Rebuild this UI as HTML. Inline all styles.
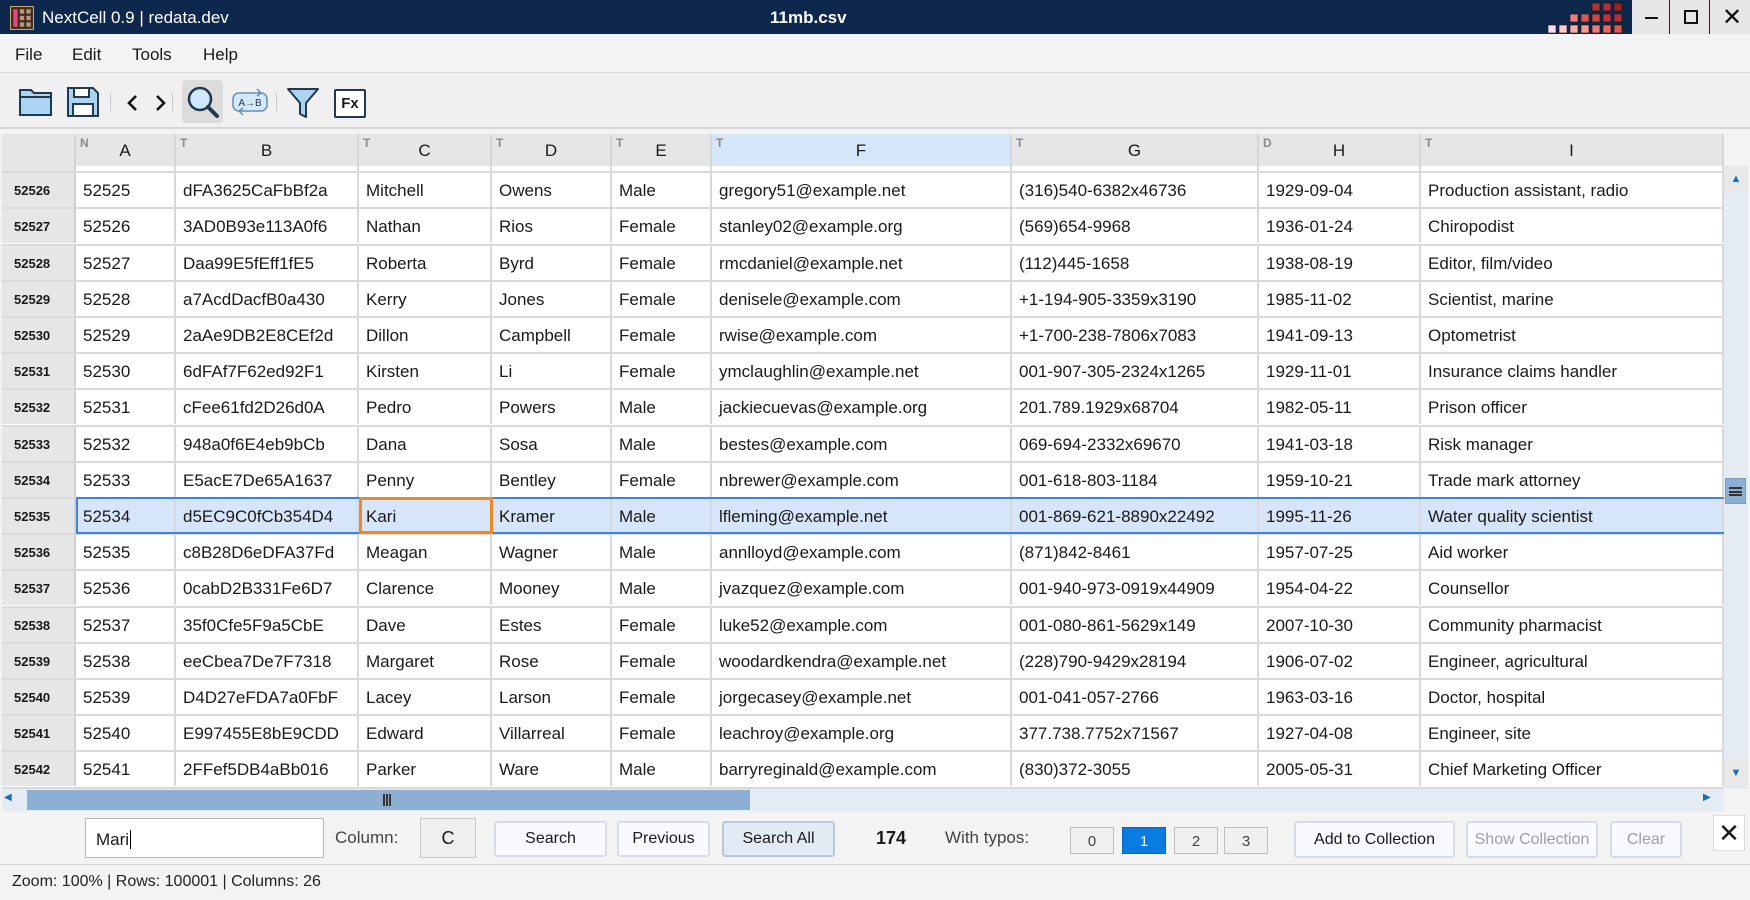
<!DOCTYPE html>
<html><head><meta charset="utf-8"><style>
*{box-sizing:border-box;margin:0;padding:0}
body{width:1750px;height:900px;overflow:hidden;background:#f3f3f3;font-family:"Liberation Sans",sans-serif;position:relative;color:#1a1a1a}
.abs{position:absolute}
#title{left:0;top:0;width:1750px;height:34px;background:#0d284c;color:#fff;font-size:17px}
#menu{left:0;top:34px;width:1750px;height:39px;background:#f3f3f3;border-bottom:1px solid #dcdcdc;font-size:17px}
#menu span{position:absolute;top:11px}
#tb{left:0;top:73px;width:1750px;height:56px;background:#f0f0f0;border-bottom:2px solid #d6d6d6}
.sep{position:absolute;top:20px;width:1px;height:18px;background:#c8c8c8}
#grid{left:2px;top:134px;width:1722px;height:655px;background:#fff;overflow:hidden}
.hdr{position:absolute;top:0;height:32px;background:#e6e6e6;border-right:2px solid #d6d6d6;font-size:17px;text-align:center;line-height:34px}
.hdr i{position:absolute;left:4px;top:-8px;font-style:normal;font-size:12px;color:#8a8a8a;font-weight:bold}
#rows{position:absolute;left:0;top:32px;width:1722px;height:623px;overflow:hidden}
.r{position:absolute;left:0;height:36.2px;width:1722px;border-bottom:2px solid #dadada;font-size:17px}
.r div{position:absolute;top:0;height:34px;line-height:35px;padding-left:7px;border-right:2px solid #dadada;white-space:nowrap;overflow:hidden}
.r div.rh{background:#e6e6e6;font-weight:bold;font-size:13px;padding-left:12px;border-right:2px solid #d0d0d0}
.sel{background:#d6e5f9}
.btn{position:absolute;border:2px solid #d8dde3;background:#f7f9fc;border-radius:3px;text-align:center;font-size:16px}
</style></head><body>
<div id="title" class="abs">
 <svg class="abs" style="left:10px;top:6px" width="24" height="24" viewBox="0 0 22 22"><rect x="0.5" y="0.5" width="21" height="21" fill="#3a2a20" stroke="#c9a070"/><rect x="3" y="3" width="4" height="16" fill="#e8457a"/><g fill="#b89a78"><rect x="9" y="3" width="4" height="4"/><rect x="15" y="3" width="4" height="4"/><rect x="9" y="9" width="4" height="4"/><rect x="15" y="9" width="4" height="4"/><rect x="9" y="15" width="4" height="4"/><rect x="15" y="15" width="4" height="4"/></g></svg>
 <span class="abs" style="left:42px;top:8px">NextCell 0.9 | redata.dev</span>
 <span class="abs" style="left:770px;top:8px;font-weight:bold">11mb.csv</span>
 <svg class="abs" style="left:1545px;top:2px" width="86" height="32"><g stroke="#111" stroke-width="0.6">
 <rect x="47" y="1" width="8" height="8" fill="#a33"/><rect x="58" y="1" width="8" height="8" fill="#a33"/><rect x="69" y="1" width="8" height="8" fill="#922"/>
 <rect x="25" y="12" width="8" height="8" fill="#e77"/><rect x="36" y="12" width="8" height="8" fill="#d55"/><rect x="47" y="12" width="8" height="8" fill="#c44"/><rect x="58" y="12" width="8" height="8" fill="#b33"/><rect x="69" y="12" width="8" height="8" fill="#a33"/>
 <rect x="3" y="23" width="8" height="8" fill="#fde"/><rect x="14" y="23" width="8" height="8" fill="#fcc"/><rect x="25" y="23" width="8" height="8" fill="#faa"/><rect x="36" y="23" width="8" height="8" fill="#f99"/><rect x="47" y="23" width="8" height="8" fill="#e77"/><rect x="58" y="23" width="8" height="8" fill="#e66"/><rect x="69" y="23" width="8" height="8" fill="#d55"/></g></svg>
 <div class="abs" style="left:1632px;top:0;width:118px;height:34px;background:#e6e6e6;color:#111">
  <div class="abs" style="left:0;top:0;width:38px;height:34px;border-right:1px solid #0d284c"></div>
  <div class="abs" style="left:13px;top:17px;width:13px;height:2px;background:#111"></div>
  <div class="abs" style="left:38px;top:0;width:40px;height:34px;border-right:1px solid #0d284c"></div>
  <div class="abs" style="left:52px;top:10px;width:14px;height:14px;border:2px solid #111"></div>
  <span class="abs" style="left:90px;top:3px;font-size:24px">✕</span>
 </div>
</div>
<div id="menu" class="abs"><span style="left:15px">File</span><span style="left:72px">Edit</span><span style="left:132px">Tools</span><span style="left:203px">Help</span></div>
<div id="tb" class="abs">
 <svg class="abs" style="left:18px;top:13px" width="36" height="32" viewBox="0 0 36 32"><path d="M2 4h11l3 3h17v22H2z" fill="#a9d4f2" stroke="#23384e" stroke-width="2"/><path d="M2 11h31" stroke="#23384e" stroke-width="2"/></svg>
 <svg class="abs" style="left:66px;top:13px" width="34" height="32" viewBox="0 0 34 32"><path d="M2 2h25l5 5v23H2z" fill="#a9d4f2" stroke="#23384e" stroke-width="2"/><rect x="8" y="2" width="15" height="9" fill="#fff" stroke="#23384e" stroke-width="2"/><rect x="7" y="18" width="20" height="12" fill="#fff" stroke="#23384e" stroke-width="2"/></svg>
 <div class="sep" style="left:110px"></div>
 <svg class="abs" style="left:124px;top:20px" width="44" height="20"><path d="M12 3l-7 7 7 7M33 3l7 7-7 7" fill="none" stroke="#111" stroke-width="2.6"/></svg>
 <div class="sep" style="left:172px"></div>
 <div class="abs" style="left:182px;top:7px;width:41px;height:43px;background:#dcdcdc;border-radius:4px"></div>
 <svg class="abs" style="left:185px;top:11px" width="36" height="36"><circle cx="15" cy="15" r="11" fill="#cfe8fb" stroke="#23384e" stroke-width="2.5"/><path d="M23 23l9 9" stroke="#23384e" stroke-width="4" stroke-linecap="round"/></svg>
 <svg class="abs" style="left:231px;top:14px" width="38" height="30"><rect x="2" y="6" width="34" height="18" rx="6" fill="#d3e9fa" stroke="#6a8eb0" stroke-width="1.5"/><text x="19" y="19" font-size="10" text-anchor="middle" fill="#23384e" font-family="Liberation Sans">A→B</text><path d="M26 2l4 4-4 3M12 28l-4-4 4-3" fill="none" stroke="#6a8eb0" stroke-width="1.5"/></svg>
 <div class="sep" style="left:276px"></div>
 <svg class="abs" style="left:286px;top:13px" width="34" height="34"><path d="M2 3h30L20 17v14l-6-3V17z" fill="#a9d4f2" stroke="#23384e" stroke-width="2" stroke-linejoin="round"/></svg>
 <div class="abs" style="left:334px;top:16px;width:32px;height:29px;border:2px solid #23384e;border-radius:2px;background:#fff;font-weight:bold;font-size:15px;text-align:center;line-height:25px">Fx</div>
</div>
<div id="grid" class="abs">
 <div class="hdr" style="left:0;width:74px"></div>
 <div class="hdr" style="left:74px;width:100px"><i>N</i>A</div>
 <div class="hdr" style="left:174px;width:183px"><i>T</i>B</div>
 <div class="hdr" style="left:357px;width:133px"><i>T</i>C</div>
 <div class="hdr" style="left:490px;width:120px"><i>T</i>D</div>
 <div class="hdr" style="left:610px;width:100px"><i>T</i>E</div>
 <div class="hdr" style="left:710px;width:300px;background:#d4e6f8"><i>T</i>F</div>
 <div class="hdr" style="left:1010px;width:247px"><i>T</i>G</div>
 <div class="hdr" style="left:1257px;width:162px"><i>D</i>H</div>
 <div class="hdr" style="left:1419px;width:303px"><i>T</i>I</div>
 <div id="rows"></div>
</div>
<div class="abs" style="left:1724px;top:166px;width:24px;height:623px;background:#e4ebf3"></div>
<div class="abs" style="left:1724px;top:166px;width:24px;height:26px;background:#e8e8e8;color:#1570b8;font-size:11px;text-align:center;line-height:26px">▲</div>
<div class="abs" style="left:1724px;top:760px;width:24px;height:26px;background:#e8e8e8;color:#1570b8;font-size:11px;text-align:center;line-height:26px">▼</div>
<div class="abs" style="left:1725px;top:478px;width:21px;height:26px;background:#8eafd4;border:1px solid #7a9cc4"><div style="margin:8px 3px 0;height:9px;border-top:2px solid #333;border-bottom:2px solid #333"><div style="margin-top:1.5px;height:2px;background:#333"></div></div></div>
<div class="abs" style="left:2px;top:789px;width:1722px;height:22px;background:#e4ebf3"></div>
<div class="abs" style="left:4px;top:792px;width:14px;height:16px;color:#1570b8;font-size:10px">◀</div>
<div class="abs" style="left:1703px;top:792px;width:14px;height:16px;color:#1570b8;font-size:10px">▶</div>
<div class="abs" style="left:27px;top:790px;width:723px;height:20px;background:#8eafd4"></div>
<div class="abs" style="left:383px;top:794px;width:8px;height:12px;border-left:2px solid #333;border-right:2px solid #333"><div style="margin-left:1px;width:2px;height:12px;background:#333"></div></div>
<div class="abs" style="left:0;top:811px;width:1750px;height:54px;background:#f3f3f3;border-bottom:1px solid #d6d6d6;font-size:17px">
 <div class="abs" style="left:85px;top:7px;width:239px;height:40px;background:#fff;border:1px solid #b9b9b9;padding:11px 0 0 10px">Mari<span style="border-left:1px solid #000;margin-left:1px"></span></div>
 <span class="abs" style="left:335px;top:17px;color:#444">Column:</span>
 <div class="abs" style="left:420px;top:7px;width:56px;height:40px;background:#efefef;border:1px solid #c8c8c8;text-align:center;line-height:38px;font-size:18px">C</div>
 <div class="btn" style="left:494px;top:10px;width:113px;height:36px;line-height:32px">Search</div>
 <div class="btn" style="left:617px;top:10px;width:93px;height:36px;line-height:32px">Previous</div>
 <div class="btn" style="left:722px;top:10px;width:113px;height:36px;line-height:32px;background:#e2eaf4;border-color:#b6c8dc">Search All</div>
 <span class="abs" style="left:876px;top:17px;font-weight:bold;font-size:18px">174</span>
 <span class="abs" style="left:945px;top:17px;color:#444">With typos:</span>
 <div class="abs" style="left:1070px;top:16px;width:44px;height:27px;border:1px solid #bdbdbd;background:#f0f0f0;text-align:center;line-height:27px;font-size:15px;color:#444">0</div>
 <div class="abs" style="left:1122px;top:16px;width:44px;height:27px;border:1px solid #0a64c2;background:#0a7be0;text-align:center;line-height:27px;font-size:15px;color:#fff">1</div>
 <div class="abs" style="left:1174px;top:16px;width:44px;height:27px;border:1px solid #bdbdbd;background:#f0f0f0;text-align:center;line-height:27px;font-size:15px;color:#444">2</div>
 <div class="abs" style="left:1224px;top:16px;width:44px;height:27px;border:1px solid #bdbdbd;background:#f0f0f0;text-align:center;line-height:27px;font-size:15px;color:#444">3</div>
 <div class="btn" style="left:1294px;top:10px;width:161px;height:37px;line-height:33px">Add to Collection</div>
 <div class="btn" style="left:1466px;top:10px;width:132px;height:37px;line-height:33px;color:#a0a0a0">Show Collection</div>
 <div class="btn" style="left:1610px;top:10px;width:72px;height:37px;line-height:33px;color:#a0a0a0">Clear</div>
 <div class="abs" style="left:1713px;top:4px;width:32px;height:36px;background:#fff;border:1px solid #ddd;text-align:center;line-height:34px;font-size:26px">✕</div>
</div>
<div class="abs" style="left:12px;top:873px;font-size:16px;color:#222">Zoom: 100% | Rows: 100001 | Columns: 26</div>
<script>
var cols=[[0,74],[74,100],[174,183],[357,133],[490,120],[610,100],[710,300],[1010,247],[1257,162],[1419,303]];
var d=[
["52525","52524","","","","","","","",""],
["52526","52525","dFA3625CaFbBf2a","Mitchell","Owens","Male","gregory51@example.net","(316)540-6382x46736","1929-09-04","Production assistant, radio"],
["52527","52526","3AD0B93e113A0f6","Nathan","Rios","Female","stanley02@example.org","(569)654-9968","1936-01-24","Chiropodist"],
["52528","52527","Daa99E5fEff1fE5","Roberta","Byrd","Female","rmcdaniel@example.net","(112)445-1658","1938-08-19","Editor, film/video"],
["52529","52528","a7AcdDacfB0a430","Kerry","Jones","Female","denisele@example.com","+1-194-905-3359x3190","1985-11-02","Scientist, marine"],
["52530","52529","2aAe9DB2E8CEf2d","Dillon","Campbell","Female","rwise@example.com","+1-700-238-7806x7083","1941-09-13","Optometrist"],
["52531","52530","6dFAf7F62ed92F1","Kirsten","Li","Female","ymclaughlin@example.net","001-907-305-2324x1265","1929-11-01","Insurance claims handler"],
["52532","52531","cFee61fd2D26d0A","Pedro","Powers","Male","jackiecuevas@example.org","201.789.1929x68704","1982-05-11","Prison officer"],
["52533","52532","948a0f6E4eb9bCb","Dana","Sosa","Male","bestes@example.com","069-694-2332x69670","1941-03-18","Risk manager"],
["52534","52533","E5acE7De65A1637","Penny","Bentley","Female","nbrewer@example.com","001-618-803-1184","1959-10-21","Trade mark attorney"],
["52535","52534","d5EC9C0fCb354D4","Kari","Kramer","Male","lfleming@example.net","001-869-621-8890x22492","1995-11-26","Water quality scientist"],
["52536","52535","c8B28D6eDFA37Fd","Meagan","Wagner","Male","annlloyd@example.com","(871)842-8461","1957-07-25","Aid worker"],
["52537","52536","0cabD2B331Fe6D7","Clarence","Mooney","Male","jvazquez@example.com","001-940-973-0919x44909","1954-04-22","Counsellor"],
["52538","52537","35f0Cfe5F9a5CbE","Dave","Estes","Female","luke52@example.com","001-080-861-5629x149","2007-10-30","Community pharmacist"],
["52539","52538","eeCbea7De7F7318","Margaret","Rose","Female","woodardkendra@example.net","(228)790-9429x28194","1906-07-02","Engineer, agricultural"],
["52540","52539","D4D27eFDA7a0FbF","Lacey","Larson","Female","jorgecasey@example.net","001-041-057-2766","1963-03-16","Doctor, hospital"],
["52541","52540","E997455E8bE9CDD","Edward","Villarreal","Female","leachroy@example.org","377.738.7752x71567","1927-04-08","Engineer, site"],
["52542","52541","2FFef5DB4aBb016","Parker","Ware","Male","barryreginald@example.com","(830)372-3055","2005-05-31","Chief Marketing Officer"],
["52543","52542","","","","","","","",""]];
var h="";
d.forEach(function(r,i){
 var top=-29+i*36.2, s=(r[0]=="52535");
 h+='<div class="r" style="top:'+top+'px">';
 r.forEach(function(c,j){
  var cl=j==0?'rh':(s?'sel':'');
  h+='<div class="'+cl+'" style="left:'+cols[j][0]+'px;width:'+cols[j][1]+'px">'+c+'</div>';
 });
 h+='</div>';
 if(s){h+='<div style="position:absolute;left:74px;top:'+(top-2)+'px;width:1648px;height:37px;border-top:2px solid #3a86dc;border-bottom:2px solid #3a86dc;border-left:2px solid #3a86dc"></div>';
  h+='<div style="position:absolute;left:357px;top:'+(top-2)+'px;width:134px;height:37px;border:3px solid #f0882a"></div>';}
});
document.getElementById('rows').innerHTML=h;
</script>
</body></html>
